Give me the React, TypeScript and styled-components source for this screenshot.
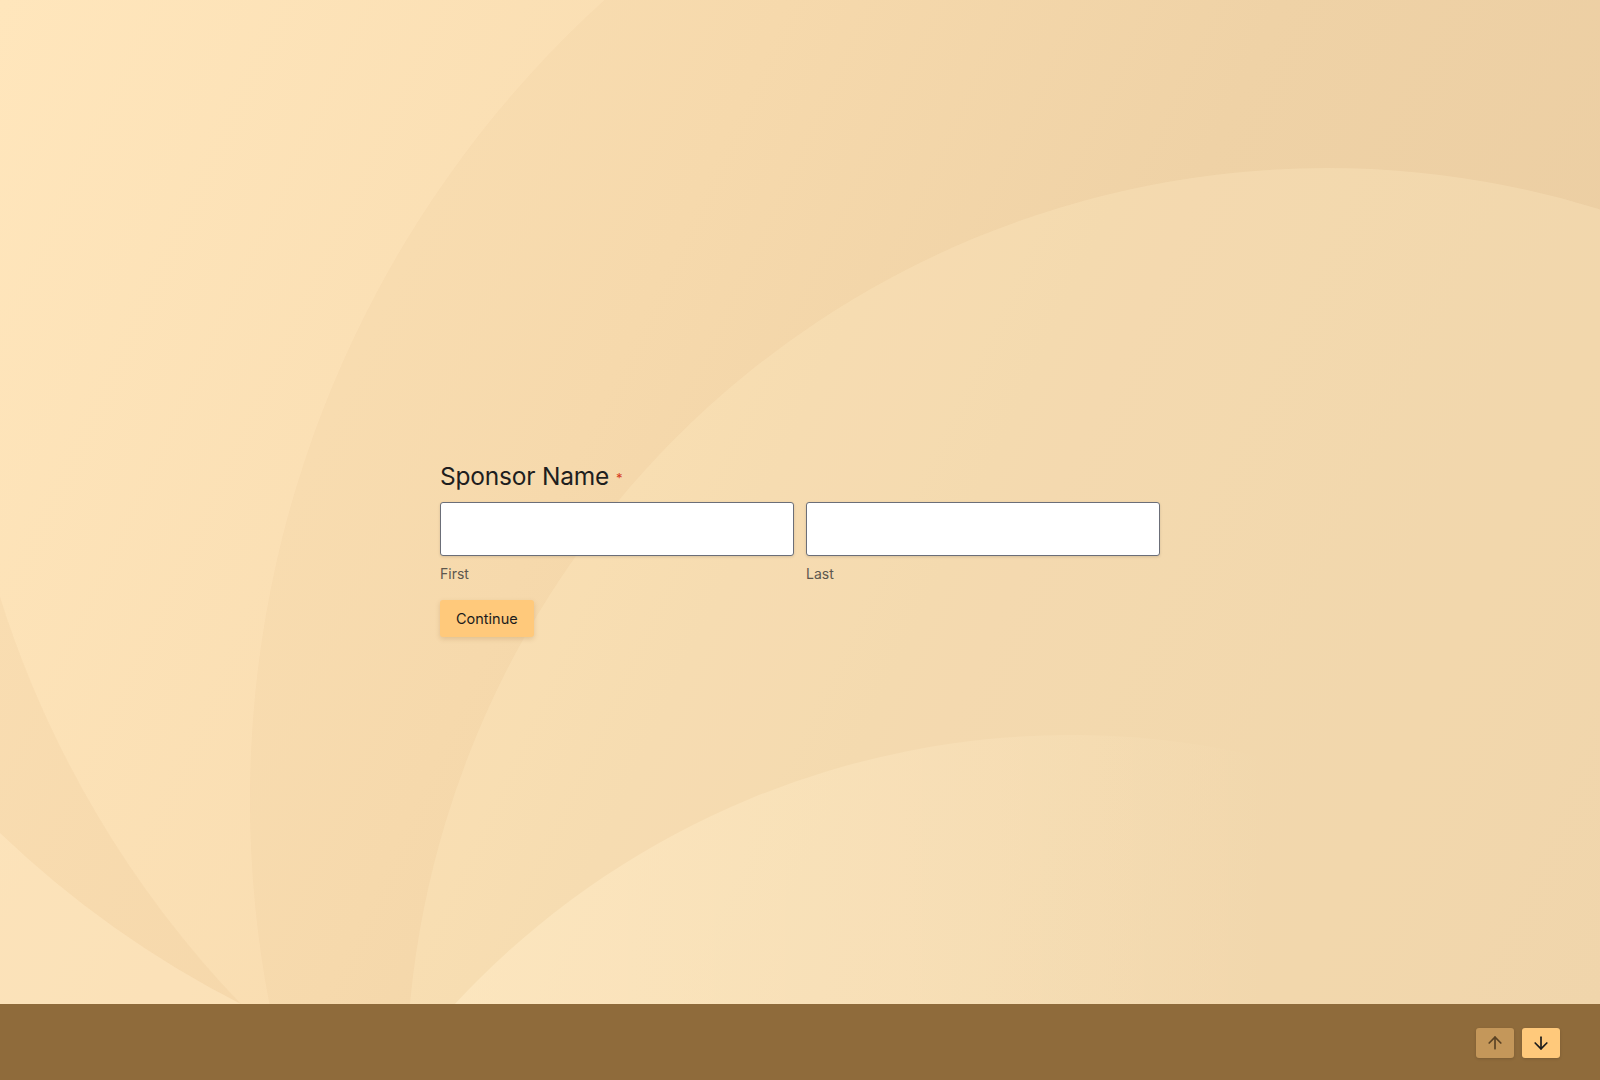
import React, { FC } from 'react'
import styled, { createGlobalStyle } from 'styled-components'
import { ArrowUp, ArrowDown } from 'lucide-react'

const GlobalStyle = createGlobalStyle`
  html, body {
    margin: 0;
    padding: 0;
    height: 100%;
  }
  body {
    font-family: Inter, "Noto Sans", Arial, sans-serif;
    overflow: hidden;
  }
`

// decorative petal arcs behind the form
const Petals: FC = () => (
  <Backdrop viewBox="0 0 1600 1004" preserveAspectRatio="none" aria-hidden>
    <defs>
      <linearGradient id="fadeB" gradientUnits="userSpaceOnUse" x1="420" y1="0" x2="1270" y2="0">
        <stop offset="0" stopColor="#ffebc6" stopOpacity="0.62" />
        <stop offset="0.55" stopColor="#ffebc6" stopOpacity="0.35" />
        <stop offset="1" stopColor="#ffebc6" stopOpacity="0" />
      </linearGradient>
    </defs>
    <circle cx="1330" cy="800" r="1080" fill="#a06e28" fillOpacity="0.03" />
    <circle cx="1327" cy="1089" r="921" fill="#ffeac4" fillOpacity="0.3" />
    <circle cx="1071" cy="1575" r="840" fill="url(#fadeB)" />
    <path d="M0 597 A1040 1040 0 0 0 241 1004 L0 1004 Z" fill="#aa7832" fillOpacity="0.05" />
    <path d="M0 833 A1013 1013 0 0 0 241 1004 L0 1004 Z" fill="#ffeac4" fillOpacity="0.5" />
  </Backdrop>
)

const App: FC = () => {
  return (
    <>
      <GlobalStyle />
      <Page>
        <Stage>
          <Petals />
          <Form>
            <Title>
              Sponsor Name <Required>*</Required>
            </Title>
            <Fields>
              <Field>
                <Input type="text" />
                <Hint>First</Hint>
              </Field>
              <Field>
                <Input type="text" />
                <Hint>Last</Hint>
              </Field>
            </Fields>
            <ContinueButton type="button">Continue</ContinueButton>
          </Form>
        </Stage>
        <Footer>
          <NavButton $active={false} aria-label="Previous">
            <ArrowUp size={20} strokeWidth={2} />
          </NavButton>
          <NavButton $active aria-label="Next">
            <ArrowDown size={20} strokeWidth={2} />
          </NavButton>
        </Footer>
      </Page>
    </>
  )
}

export default App

const Page = styled.div`
  width: 100vw;
  height: 100vh;
  display: flex;
  flex-direction: column;
`

const Stage = styled.main`
  position: relative;
  flex: 1;
  display: flex;
  align-items: center;
  justify-content: center;
  padding-top: 93px;
  overflow: hidden;
  background: linear-gradient(115deg, #ffe6bc 0%, #f9ddb1 38%, #f2d6ab 62%, #edd0a6 100%);
`

const Backdrop = styled.svg`
  position: absolute;
  inset: 0;
  width: 100%;
  height: 100%;
  pointer-events: none;
`

const Form = styled.form`
  position: relative;
  width: 720px;
  display: flex;
  flex-direction: column;
  align-items: flex-start;
`

const Title = styled.h1`
  margin: 0 0 7px;
  font-size: 24.5px;
  line-height: 32px;
  font-weight: 400;
  color: #1e1e1e;
  letter-spacing: -0.2px;
`

const Required = styled.span`
  color: #d63a1f;
  font-size: 13px;
  vertical-align: middle;
`

const Fields = styled.div`
  width: 100%;
  display: grid;
  grid-template-columns: 1fr 1fr;
  gap: 12px;
`

const Field = styled.div`
  display: flex;
  flex-direction: column;
`

const Input = styled.input`
  height: 54px;
  box-sizing: border-box;
  border: 1px solid #6b6e78;
  border-radius: 3px;
  background: #ffffff;
  box-shadow: 0 1px 3px rgba(0, 0, 0, 0.12);
  padding: 0 12px;
  font-size: 16px;
  font-family: inherit;
  outline: none;
`

const Hint = styled.span`
  margin-top: 9px;
  font-size: 14px;
  line-height: 18px;
  color: #5d574e;
`

const ContinueButton = styled.button`
  margin-top: 17px;
  height: 37px;
  padding: 0 16px;
  border: none;
  border-radius: 3px;
  background: #ffc97b;
  color: #1b1b1b;
  font-family: inherit;
  font-size: 14.5px;
  font-weight: 400;
  box-shadow: 0 2px 5px rgba(120, 80, 20, 0.18);
  cursor: pointer;
`

const Footer = styled.footer`
  height: 76px;
  flex-shrink: 0;
  background: #8f6b3b;
  display: flex;
  justify-content: flex-end;
  align-items: flex-start;
  gap: 8px;
  padding: 24px 40px 0 0;
  box-sizing: border-box;
`

const NavButton = styled.button<{ $active: boolean }>`
  width: 38px;
  height: 30px;
  border: none;
  border-radius: 3px;
  padding: 0;
  display: flex;
  align-items: center;
  justify-content: center;
  background: ${p => (p.$active ? '#ffc97b' : '#c4975a')};
  color: ${p => (p.$active ? '#1b1b1b' : '#5a4224')};
  box-shadow: 0 1px 3px rgba(0, 0, 0, 0.15);
  cursor: pointer;
`
